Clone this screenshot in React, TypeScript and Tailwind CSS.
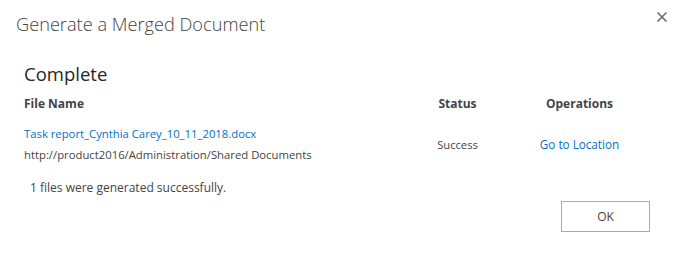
import React from 'react';

const font = { fontFamily: '"Open Sans", "Noto Sans", Arial, sans-serif' };

export default function App() {
  return (
    <div className="w-[680px] h-[265px] bg-white text-[#444] relative" style={font}>
      {/* close button */}
      <button className="absolute top-[12px] left-[657px] w-[10px] h-[10px] text-[#666]">
        <svg width="10" height="10" viewBox="0 0 10 10" className="block">
          <path d="M0.5 0.5 L9.5 9.5 M9.5 0.5 L0.5 9.5" stroke="currentColor" strokeWidth="1.5" />
        </svg>
      </button>

      <div className="pl-[16px] pt-[10px]">
        <h1 className="text-[18.2px] font-light leading-[28px] text-[#444]">Generate a Merged Document</h1>
      </div>

      <div className="pl-[24px] pr-[30px] pt-[24px]">
        <h2 className="text-[18.5px] leading-[24px] text-[#262626]">Complete</h2>

        <table className="mt-[6px] w-[620px] text-[12px] border-collapse">
          <thead>
            <tr className="h-[24px]">
              <th className="text-left font-bold text-[#444] p-0 w-[376px]">File Name</th>
              <th className="text-center font-bold text-[#444] p-0 w-[115px]">Status</th>
              <th className="text-center font-bold text-[#444] p-0">Operations</th>
            </tr>
          </thead>
          <tbody>
            <tr>
              <td className="pt-[7px] p-0 text-[11.3px]">
                <a href="#" className="block text-[#0072c6] leading-[21px]">
                  Task report_Cynthia Carey_10_11_2018.docx
                </a>
                <div className="leading-[21px] text-[#444]">http://product2016/Administration/Shared Documents</div>
              </td>
              <td className="text-center align-middle pt-[9px] text-[11.2px]">Success</td>
              <td className="text-center align-middle pt-[9px] text-[11.7px]">
                <a href="#" className="text-[#0072c6]">Go to Location</a>
              </td>
            </tr>
          </tbody>
        </table>

        <p className="pl-[6px] mt-[13px] text-[12px] leading-[20px] text-[#444]">1 files were generated successfully.</p>

        <div className="flex justify-end mt-[3px]">
          <button className="w-[89px] h-[31px] border border-[#ababab] bg-white text-[12px] text-[#444]">OK</button>
        </div>
      </div>
    </div>
  );
}
